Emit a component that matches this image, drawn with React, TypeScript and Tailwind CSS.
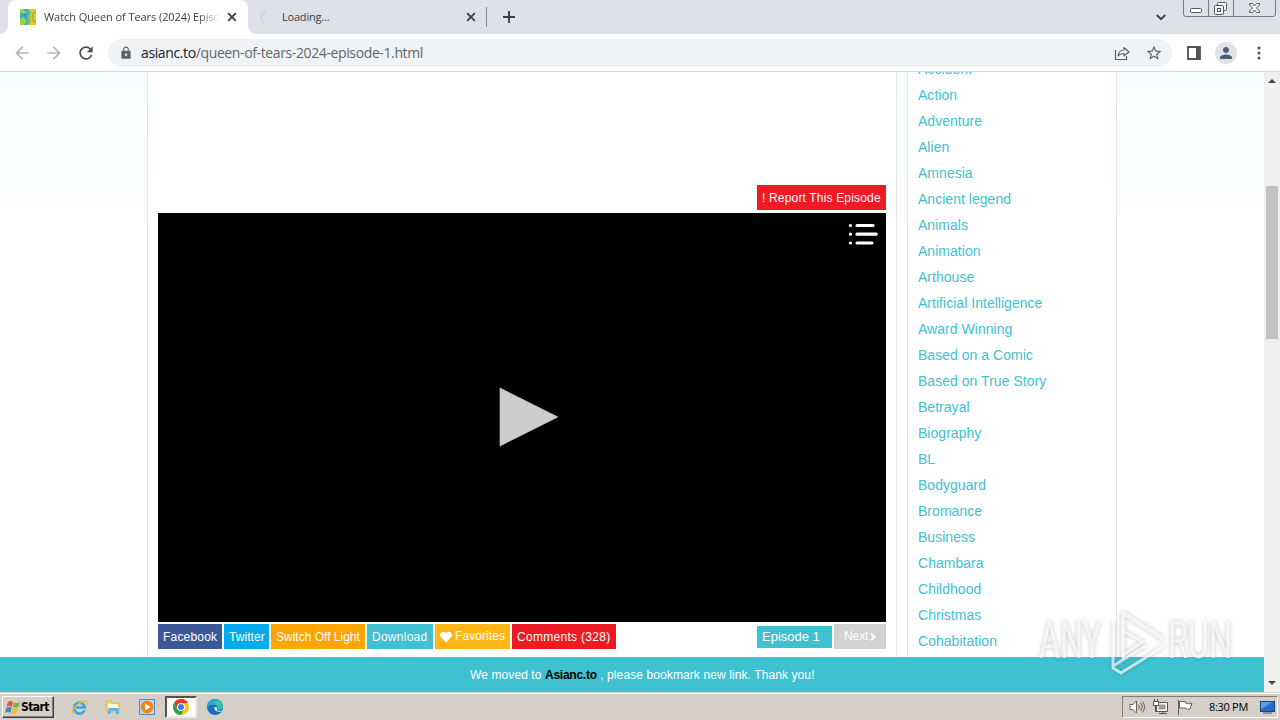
import { FaHeart } from "react-icons/fa";
import { MdLock, MdPerson, MdStarBorder, MdRefresh, MdArrowBack, MdArrowForward } from "react-icons/md";

const genres = [
  "Accident", "Action", "Adventure", "Alien", "Amnesia", "Ancient legend", "Animals", "Animation",
  "Arthouse", "Artificial Intelligence", "Award Winning", "Based on a Comic", "Based on True Story",
  "Betrayal", "Biography", "BL", "Bodyguard", "Bromance", "Business", "Chambara", "Childhood",
  "Christmas", "Cohabitation",
];

function Cross({ className = "" }: { className?: string }) {
  return (
    <svg width="10" height="10" viewBox="0 0 10 10" className={className}>
      <path d="M1.2 1.2 8.8 8.8M8.8 1.2 1.2 8.8" stroke="#3c4043" strokeWidth="1.9" />
    </svg>
  );
}

function Favicon() {
  return (
    <svg width="16" height="16" viewBox="0 0 16 16">
      <rect width="16" height="16" fill="#35b6c4" />
      <path d="M9 0h7v16H8l2-8z" fill="#f0c419" />
      <path d="M0 0h3l3 3-2 2-4-2zM0 10l4-2 3 3-3 5H0z" fill="#a6cf3f" />
      <path d="M8 1c3 1 3 5 0 7 3 2 3 5 0 7" fill="none" stroke="#86c264" strokeWidth="1.6" />
      <path d="M15.500 3c-4 1-4 9 0 10" fill="none" stroke="#8fb83c" strokeWidth="1.500" />
      <path d="M2 6c3-2 5 1 3 4" fill="none" stroke="#2a93bd" strokeWidth="1.500" />
    </svg>
  );
}

function TabStrip() {
  return (
    <div className="h-[34px] flex bg-[#dee1e8] text-[11px] text-[#3c4043]">
      <div className="w-2 bg-white"><div className="w-2 h-[34px] bg-[#dee1e8] rounded-br-lg" /></div>
      <div className="w-60 bg-white rounded-t-lg flex items-center pl-3">
        <Favicon />
        <div className="ml-2 w-[176px] overflow-hidden whitespace-nowrap font-['Open_Sans',sans-serif] tracking-[-0.07px] [mask-image:linear-gradient(to_right,black_88%,transparent)]">
          Watch Queen of Tears (2024) Episode 1
        </div>
        <Cross className="ml-[7px]" />
      </div>
      <div className="w-2 bg-white"><div className="w-2 h-[34px] bg-[#dee1e8] rounded-bl-lg" /></div>
      <div className="w-[231px] flex items-center">
        <svg width="16" height="16" viewBox="0 0 16 16" className="ml-[3px]">
          <path d="M6 14.5A7 7 0 0 1 7.5 1.5" fill="none" stroke="#c5d6f2" strokeWidth="2" />
        </svg>
        <span className="ml-[7px] w-[184px] font-['Open_Sans',sans-serif] tracking-[-0.2px]">Loading...</span>
        <Cross />
      </div>
      <div className="w-px h-5 mt-[7px] -ml-px bg-[#80868b]" />
      <svg width="12" height="12" viewBox="0 0 12 12" className="ml-4 mt-[11px]">
        <path d="M6 0v12M0 6h12" stroke="#3c4043" strokeWidth="1.9" />
      </svg>
      <svg width="10" height="7" viewBox="0 0 10 7" className="ml-[641px] mt-[14px]">
        <path d="M.8 1 5 5.2 9.2 1" fill="none" stroke="#3c4043" strokeWidth="1.9" />
      </svg>
      <WindowButtons />
    </div>
  );
}

function WindowButtons() {
  return (
    <svg width="93" height="17" viewBox="0 0 93 17" className="ml-[17px]">
      <path d="M.5 0v14q0 2.500 2.500 2.500H90q2.500 0 2.500-2.500V0M25.500 0v16M50.500 0v16" fill="none" stroke="#777b82" />
      <rect x="7.500" y="8.500" width="11" height="4" rx="1" fill="#fff" stroke="#555960" />
      <g fill="#f4f5f7" stroke="#555960">
        <rect x="34.500" y="2.500" width="9" height="8" rx="1" />
        <rect x="31.500" y="5.500" width="9" height="9" rx="1" />
        <rect x="34.500" y="8.500" width="3" height="3" />
        <path d="M66.500 3.500h3l2 2.500 2-2.500h3v1.500L73.500 8l3 3v1.500h-3l-2-2.500-2 2.500h-3V11l3-3-3-3z" />
      </g>
    </svg>
  );
}

function Toolbar() {
  return (
    <div className="h-[38px] flex items-center bg-white border-b border-[#d5d7da] text-[#5f6368]">
      <MdArrowBack className="ml-3 size-5 text-[#b4b6b9]" />
      <MdArrowForward className="ml-3 size-5 text-[#b4b6b9]" />
      <MdRefresh className="ml-3 size-5 text-[#4b4f54]" />
      <div className="ml-3 w-[1064px] h-7 rounded-full bg-[#f0f3f5] flex items-center">
        <MdLock className="ml-[11px] size-[14px]" />
        <span className="ml-2 w-[969px] whitespace-nowrap text-[14px] tracking-[-0.38px] font-['Open_Sans',sans-serif] text-[#62666b]">
          <span className="text-[#202124]">asianc.to</span>/queen-of-tears-2024-episode-1.html
        </span>
        <svg width="16" height="16" viewBox="0 0 16 16" className="ml-1" fill="none" stroke="#5f6368" strokeWidth="1.200">
          <path d="M1.500 5v9.500h11V11" />
          <path d="M4 11c.5-4 2.500-6 6-6V2.500L15 7l-5 4V8.500C7.500 8.500 5.500 9 4 11z" strokeLinejoin="round" />
        </svg>
        <MdStarBorder className="ml-[15px] size-[18px]" />
      </div>
      <svg width="14" height="14" viewBox="0 0 14 14" className="ml-[15px]">
        <path d="M1 1h12v12H1z" fill="none" stroke="#515459" strokeWidth="1.800" />
        <path d="M9 1h4v12H9z" fill="#515459" />
      </svg>
      <div className="ml-[14px] size-[22px] rounded-full bg-[#dfe2e6] flex items-center justify-center">
        <MdPerson className="size-[18px] text-[#4d5d79]" />
      </div>
      <svg width="4" height="14" viewBox="0 0 4 14" className="ml-[20px]" fill="#4b4f54">
        <circle cx="2" cy="2" r="1.500" /><circle cx="2" cy="7" r="1.500" /><circle cx="2" cy="12" r="1.500" />
      </svg>
    </div>
  );
}

function Player() {
  return (
    <div className="mt-[3px] h-[409px] bg-black flex flex-col">
      <svg width="30" height="22" viewBox="0 0 30 22" className="self-end mt-[10px] mr-2" stroke="#fff" strokeWidth="3.200" strokeLinecap="round">
        <path d="M9 2.500h16M9 11.200h19.200M9 20h15M2.400 2.500h.1M2.400 11.200h.1M2.400 20h.1" />
      </svg>
      <svg width="60" height="60" viewBox="0 0 60 60" className="ml-[341px] mt-[142px]">
        <path d="M.7 .5 59.500 30 .7 59.500z" fill="#ccc" />
      </svg>
    </div>
  );
}

function ActionRow() {
  return (
    <div className="mt-0.5 flex gap-0.5 h-[25px] text-[12px] leading-[27px] text-white whitespace-nowrap">
      <span className="w-16 pl-[5px] bg-[#3b5998] tracking-[0.2px]">Facebook</span>
      <span className="w-[45px] pl-[5px] bg-[#00aced] tracking-[0.05px]">Twitter</span>
      <span className="w-[94px] pl-[5px] bg-[#ffa500]">Switch Off Light</span>
      <span className="w-[66px] pl-[5px] bg-[#3fc1d1] tracking-[0.26px]">Download</span>
      <span className="w-[75px] pl-[5px] bg-[#ffb616] flex items-center gap-[3px] tracking-[0.08px]">
        <FaHeart className="size-3" />Favorites
      </span>
      <span className="w-[104px] pl-[5px] bg-[#ee1b24] tracking-[0.3px]">Comments (328)</span>
      <span className="ml-auto mt-0.5 w-[75px] h-[22px] pl-[5px] leading-[22px] bg-[#3fc1d1] text-[13px]">Episode 1</span>
      <span className="w-[52px] pl-[10px] bg-[#d2d2d2] flex items-center tracking-[-0.1px]">
        Next
        <svg width="6" height="8" viewBox="0 0 6 8" className="ml-0.5">
          <path d="M1 .8 4.500 4 1 7.200" fill="none" stroke="#fff" strokeWidth="2" />
        </svg>
      </span>
    </div>
  );
}

function Scrollbar() {
  return (
    <div className="w-4 bg-[#f0f0f0] flex flex-col items-center">
      <svg width="8" height="4" viewBox="0 0 8 4" className="mt-[7px]"><path d="M0 4 4 0l4 4z" fill="#444" /></svg>
      <div className="mt-[103px] w-3 h-[153px] bg-[#c1c1c1]" />
      <svg width="8" height="4" viewBox="0 0 8 4" className="mt-auto mb-[7px]"><path d="M0 0h8L4 4z" fill="#444" /></svg>
    </div>
  );
}

function Watermark() {
  return (
    <svg width="210" height="76" viewBox="0 0 210 76" className="absolute left-[1034px] top-[602px] [filter:drop-shadow(0_0_2px_rgba(0,0,0,0.32))]">
      <g fill="#fff" fillOpacity=".7" fontFamily="Roboto, sans-serif" fontSize="51">
        <text x="5" y="56" textLength="63" lengthAdjust="spacingAndGlyphs">ANY</text>
        <text x="134" y="56" textLength="64" lengthAdjust="spacingAndGlyphs">RUN</text>
      </g>
      <g fill="none" stroke="#fff" strokeOpacity=".7" strokeWidth="4" strokeLinejoin="round" strokeLinecap="round">
        <path d="M89 55V11l39 25" />
        <path d="M79 21v43l32-20" strokeWidth="3" />
        <path d="M79 66l8 5 43-27M89 29l20 11-20 13" strokeWidth="3" />
      </g>
    </svg>
  );
}

function StartLogo() {
  return (
    <svg width="16" height="15" viewBox="0 0 16 15">
      <path d="M3 2q3-2 5 0L7 7Q4 5 1.500 7z" fill="#e8562a" />
      <path d="M9 2q3 2 6 0l-1.500 5q-3 1.500-5.500 0z" fill="#76b843" />
      <path d="M1.300 8Q4 6 6.700 8l-1.200 5Q3 11 0 13z" fill="#4286cb" />
      <path d="M7.800 8q2.500 1.500 5.500 0L12 13q-3 2-5.500 0z" fill="#f5b82e" />
    </svg>
  );
}

function Taskbar() {
  return (
    <div className="h-7 pt-px bg-[#d5cfc7]">
      <div className="h-[27px] border-t border-white flex items-center">
        <div className="ml-[2px] w-[52px] h-[22px] border border-t-white border-l-white border-r-[#404040] border-b-[#404040] shadow-[inset_-1px_-1px_#808080] flex items-center pl-[2px]">
          <StartLogo />
          <span className="text-[12px] font-bold text-black tracking-[-0.6px] font-['DejaVu_Sans_Condensed','DejaVu_Sans',sans-serif]">Start</span>
        </div>
        <svg width="17" height="17" viewBox="0 0 17 17" className="ml-[17px]">
          <path d="M13.500 11.500A5.500 5.500 0 1 1 14 8.500H5" fill="none" stroke="#39a4df" strokeWidth="2.600" />
          <path d="M2 15C-1 11 9 1 16 2.500c.5 1-.5 2.500-.5 2.500" fill="none" stroke="#e9bd37" strokeWidth="1.400" />
        </svg>
        <svg width="16" height="16" viewBox="0 0 16 16" className="ml-[17px]">
          <path d="M1 2h5l1 2h7v9H1z" fill="#f2d675" stroke="#d3ae4b" strokeWidth=".7" />
          <path d="M3 5h10v4H3z" fill="#fff8d6" />
          <path d="M3 15v-4q0-2 2-2h7q2 0 2 2v4h-3v-3H6v3z" fill="#62b4dd" />
        </svg>
        <svg width="16" height="16" viewBox="0 0 16 16" className="ml-[18px]">
          <rect x=".5" y=".5" width="15" height="15" fill="#b9d5ee" stroke="#5c88b6" />
          <circle cx="8" cy="8" r="6.200" fill="#f28416" />
          <path d="m6 4.500 5.500 3.500L6 11.500z" fill="#fff" />
        </svg>
        <div className="ml-[10px] w-8 h-[22px] bg-white border-2 border-t-[#55524e] border-l-[#55524e] border-r-[#ece9e4] border-b-[#ece9e4] flex items-center justify-center">
          <svg width="16" height="16" viewBox="0 0 16 16">
            <circle cx="8" cy="8" r="8" fill="#fbc116" />
            <path d="M1.070 4A8 8 0 0 1 14.930 4H8L5 10z" fill="#e33b2e" />
            <path d="M1.070 4A8 8 0 0 0 8 16l3.500-6H4.500z" fill="#2da14c" />
            <circle cx="8" cy="8" r="4" fill="#fff" />
            <circle cx="8" cy="8" r="3" fill="#3e7de8" />
          </svg>
        </div>
        <svg width="16" height="16" viewBox="0 0 16 16" className="ml-[10px]">
          <circle cx="8" cy="8" r="8" fill="#1670bf" />
          <path d="M0 8C0 3 4 0 8 0c5 0 8 3 8 7 0 3-3 4-6 3.500 2-2 0-5-3-5C3 5.500.5 7 0 8z" fill="#39c5a4" />
          <path d="M2 2.800A8 8 0 0 1 11 .7L7 5.500C3 5.500.5 7 0 8c0-2 .8-4 2-5.200z" fill="#27a5d8" />
          <path d="M7.500 8c-1 3 2 5.500 6.500 4.500l1-1c-4 1-5.500-.5-5-1.500 1-1 0-2-1-2z" fill="#d9eef3" />
        </svg>
        <div className="ml-auto mr-[2px] w-[156px] h-[22px] border border-t-[#807c76] border-l-[#807c76] border-r-white border-b-white flex items-center">
          <svg width="17" height="16" viewBox="0 0 17 16" className="ml-[6px]" fill="none" stroke="#66635f">
            <path d="M1 5.500h3L7.500 2v12L4 10.500H1z" fill="#fff" />
            <path d="M9.500 5.500q2 2.500 0 5M11.500 4q3.500 4 0 8M13.500 2.500q4 5.500 0 11" />
          </svg>
          <svg width="17" height="16" viewBox="0 0 17 16" className="ml-[7px]" stroke="#55534f">
            <path d="M3.500 3.500h11v9h-11z" fill="#fff" />
            <path d="M5.500 5.500h7v5h-7z" fill="#9d9b97" stroke="none" />
            <path d="M6 14.500h8M10 12.500v2M2.500 7v5.500h2" fill="none" />
            <path d="M.5 2.500h5v4h-5zM1.500 0v2M4.500 0v2" fill="#fff" />
          </svg>
          <svg width="16" height="16" viewBox="0 0 16 16" className="ml-[7px]" stroke="#66635f">
            <path d="M1.500 1v15" fill="none" />
            <path d="M2.500 2.500h6v1.500q3 1.500 6.500 0l-2 6q-3 1-5-1h-5.500z" fill="#fff" />
          </svg>
          <span className="ml-[16px] w-[42px] text-[11px] text-black whitespace-nowrap tracking-[-0.3px] font-['Open_Sans',sans-serif] font-medium">8:30 PM</span>
          <svg width="15" height="13" viewBox="0 0 15 13" className="ml-[9px]">
            <rect x=".5" y=".5" width="14" height="10" fill="#246bd0" stroke="#1a427f" />
            <path d="M1 1h12L1 8z" fill="#5e9ae6" />
            <path d="M3 12h9" stroke="#555" />
          </svg>
        </div>
      </div>
    </div>
  );
}

export default function App() {
  return (
    <div className="relative w-[1280px] h-[720px] overflow-hidden flex flex-col font-['Liberation_Sans',Arial,sans-serif]">
      <TabStrip />
      <Toolbar />
      <div className="h-[620px] flex">
        <div className="w-[1264px] flex flex-col">
          <div className="h-[585px] overflow-hidden flex pl-[147px] bg-linear-to-b from-[#f8feff] to-white to-30%">
            <main className="w-[750px] px-[10px] pt-[113px] bg-white border-x border-[#e4e7e8] flex flex-col">
              <span className="self-end w-[129px] h-[25px] pl-[5px] bg-[#ee1b24] text-white text-[12px] leading-[27px] tracking-[0.17px] whitespace-nowrap">
                ! Report This Episode
              </span>
              <Player />
              <ActionRow />
            </main>
            <aside className="ml-[10px] w-[210px] pl-[10px] bg-white border-x border-[#e4e7e8]">
              <ul className="-mt-4 text-[14px] leading-[26px] tracking-[0.03px] text-[#3fc1d1]">
                {genres.map((g) => <li key={g}>{g}</li>)}
              </ul>
            </aside>
          </div>
          <div className="h-[35px] pl-[470px] bg-[#3fc1d1] text-white text-[12px] leading-[36px] tracking-[0.1px] whitespace-nowrap">
            We moved to <b className="text-black tracking-[-0.25px]">Asianc.to</b> , please bookmark new link. Thank you!
          </div>
        </div>
        <Scrollbar />
      </div>
      <Taskbar />
      <Watermark />
    </div>
  );
}
